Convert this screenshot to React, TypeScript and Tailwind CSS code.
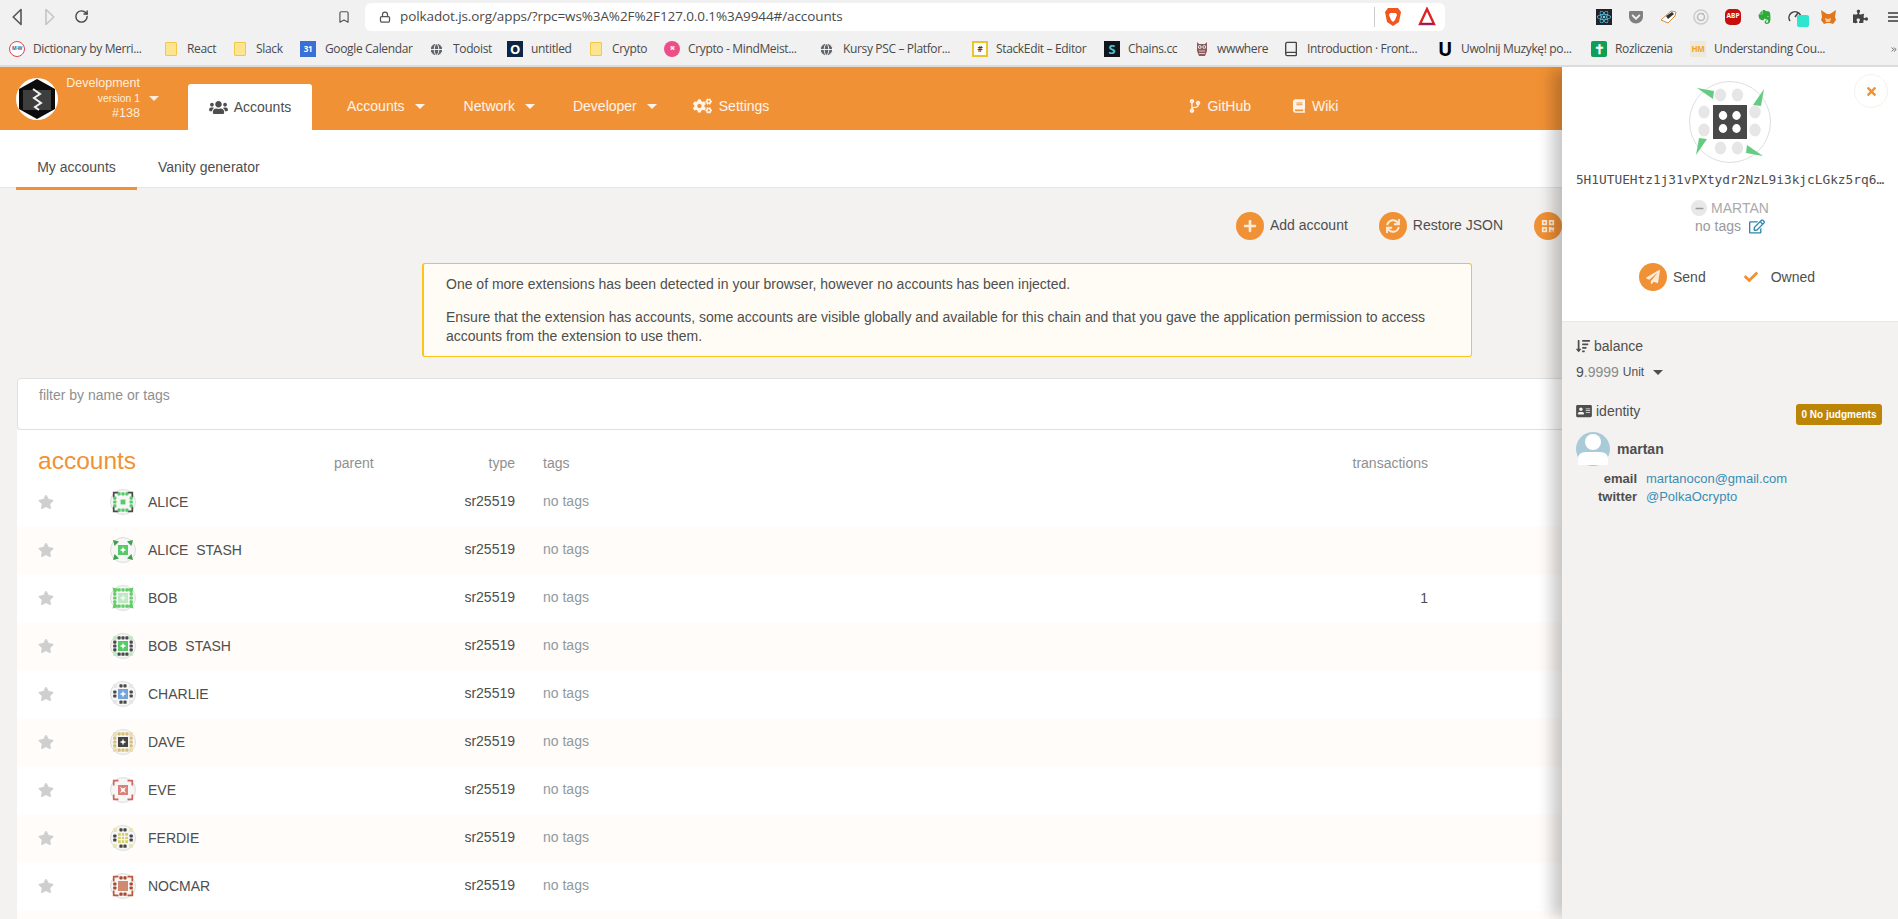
import React from "react";
import { RotateCw, Bookmark, Lock, Globe, Book, ChevronsRight } from "lucide-react";
import { FaPlus, FaSync, FaQrcode, FaPaperPlane, FaCheck, FaTimes, FaStar, FaUsers, FaCogs, FaCodeBranch, FaBook, FaRegEdit, FaSortAmountDown, FaAddressCard, FaMinus, FaPuzzlePiece, FaEvernote, FaGetPocket, FaReact } from "react-icons/fa";

const SANS = "font-['Liberation_Sans',Arial,sans-serif]";

function Caret({ className }: { className: string }) {
  return <span className={`inline-block w-0 h-0 border-x-[5px] border-x-transparent border-t-[5px] ${className}`} />;
}

function Folder() {
  return <span className="w-[12px] h-[14px] bg-[#fde58f] border border-[#f0c84c] rounded-[1px] shrink-0" />;
}
function Round({ c, t }: { c: string; t?: string }) {
  return <span className={`w-[16px] h-[16px] rounded-full shrink-0 flex items-center justify-center text-[5px] font-bold ${c}`}>{t}</span>;
}
function GlobeIco() {
  return <Globe className="w-[15px] h-[15px] text-white fill-[#5f6368] shrink-0" strokeWidth={1.4} />;
}
function Sq({ c, t }: { c: string; t?: string }) {
  return <span className={`w-[16px] h-[16px] shrink-0 flex items-center justify-center text-[8px] font-bold leading-none ${c}`}>{t}</span>;
}
function Owl() {
  return (
    <svg viewBox="0 0 16 16" className="w-[16px] h-[16px] shrink-0">
      <path d="M3 1l2 2h6l2-2v9l-2 5H5l-2-5z" fill="#8c5a5a" />
      <circle cx="5.8" cy="6" r="1.8" fill="#fff" />
      <circle cx="10.2" cy="6" r="1.8" fill="#fff" />
      <circle cx="5.8" cy="6" r="0.8" fill="#222" />
      <circle cx="10.2" cy="6" r="0.8" fill="#222" />
      <path d="M5 10h6M5 12.5h6" stroke="#e0c8c8" strokeWidth="1" />
    </svg>
  );
}

const bookmarks: { w: string; icon: React.ReactNode; label: string; gap: string }[] = [
  { w: "w-[156px]", gap: "gap-[8px]", icon: <Round c="bg-white border border-[#e0424f] text-[#44618c]" t="M·W" />, label: "Dictionary by Merri..." },
  { w: "w-[69px]", gap: "gap-[10px]", icon: <Folder />, label: "React" },
  { w: "w-[66px]", gap: "gap-[10px]", icon: <Folder />, label: "Slack" },
  { w: "w-[129px]", gap: "gap-[9px]", icon: <Sq c="bg-[#3a6fd6] text-white w-[14px]" t="31" />, label: "Google Calendar" },
  { w: "w-[78px]", gap: "gap-[9px]", icon: <GlobeIco />, label: "Todoist" },
  { w: "w-[83px]", gap: "gap-[8px]", icon: <Sq c="bg-[#0b2545] text-white text-[13px]" t="O" />, label: "untitled" },
  { w: "w-[74px]", gap: "gap-[10px]", icon: <Folder />, label: "Crypto" },
  { w: "w-[155px]", gap: "gap-[8px]", icon: <Round c="bg-[#ec4f86] text-white" t="⌘" />, label: "Crypto - MindMeist..." },
  { w: "w-[153px]", gap: "gap-[9px]", icon: <GlobeIco />, label: "Kursy PSC – Platfor..." },
  { w: "w-[132px]", gap: "gap-[8px]", icon: <Sq c="bg-white border-2 border-[#e8c52e] text-[#444]" t="#" />, label: "StackEdit – Editor" },
  { w: "w-[90px]", gap: "gap-[8px]", icon: <Sq c="bg-[#10151c] text-[#4cc4d8] text-[13px]" t="S" />, label: "Chains.cc" },
  { w: "w-[89px]", gap: "gap-[7px]", icon: <Owl />, label: "wwwhere" },
  { w: "w-[154px]", gap: "gap-[8px]", icon: <Book className="w-[16px] h-[16px] text-[#444] shrink-0" />, label: "Introduction · Front..." },
  { w: "w-[154px]", gap: "gap-[8px]", icon: <Sq c="text-black text-[19px]" t="U" />, label: "Uwolnij Muzykę! po..." },
  { w: "w-[99px]", gap: "gap-[8px]", icon: <Sq c="bg-[#0f9d58] text-white text-[13px] rounded-[2px]" t="✝" />, label: "Rozliczenia" },
  { w: "w-[150px]", gap: "gap-[8px]", icon: <Sq c="bg-[#eee9dd] text-[#f2a51e]" t="HM" />, label: "Understanding Cou..." },
];

function ExtIcons() {
  return (
    <div className="flex items-center gap-[16px] shrink-0">
      <span className="w-[16px] h-[16px] bg-[#20232a] flex items-center justify-center">
        <FaReact className="w-[14px] h-[14px] text-[#61dafb]" />
      </span>
      <FaGetPocket className="w-[16px] h-[16px] text-[#808080]" />
      <svg viewBox="0 0 17 16" className="w-[17px] h-[16px]"><path d="M1 11L11 2l5 1-1 4-7 7z" fill="#fff" stroke="#d58a3c" strokeWidth="1" /><path d="M6 7l6-4 2 2-6 5z" fill="#333" /></svg>
      <svg viewBox="0 0 16 16" className="w-[16px] h-[16px]" fill="none"><circle cx="8" cy="8" r="7" stroke="#ccc" strokeWidth="1.5" /><circle cx="8" cy="8" r="3.5" stroke="#bbb" strokeWidth="1.5" /><circle cx="10" cy="5" r="1" fill="#bbb" /></svg>
      <span className="w-[16px] h-[16px] rounded-[5px] bg-[#c70d0d] text-white text-[6.5px] font-bold flex items-center justify-center leading-none">ABP</span>
      <FaEvernote className="w-[15px] h-[16px] text-[#2dab39]" />
      <span className="relative w-[14px] h-[16px]">
        <svg viewBox="0 0 14 14" className="w-[14px] h-[14px]" fill="none" stroke="#444" strokeWidth="1.5"><path d="M2 12a6 6 0 1 1 10 0" /><path d="M7 8l3-4" /></svg>
        <span className="absolute left-[9px] top-[6px] w-[12px] h-[12px] rounded-[2px] bg-[#2ee6d0]" />
      </span>
      <svg viewBox="0 0 17 16" className="w-[17px] h-[16px] ml-[2px]"><path d="M1 1l6 4h3l6-4-1 7 1 3-3 4-3-1H7l-3 1-3-4 1-3z" fill="#e2761b" /><path d="M5 9l3 1 3-1-1 4H6z" fill="#f6c9a0" /></svg>
      <FaPuzzlePiece className="w-[15px] h-[15px] text-[#444]" />
      <span className="w-[10px] h-[10px] flex flex-col justify-between ml-[4px]"><i className="block h-[2px] bg-[#666]" /><i className="block h-[2px] bg-[#666]" /><i className="block h-[2px] bg-[#666]" /></span>
    </div>
  );
}

function BrowserChrome() {
  return (
    <div className="bg-[#f1f1f1] border-b-2 border-[#dcdcdc] h-[67px] shrink-0 flex flex-col font-['Open_Sans',sans-serif]">
      <div className="h-[33px] flex items-center pl-[12px]">
        <svg viewBox="0 0 10 18" className="w-[10px] h-[18px]" fill="none" stroke="#555" strokeWidth="1.6"><path d="M9 1.5L1.2 9 9 16.5z" strokeLinejoin="round" /></svg>
        <svg viewBox="0 0 10 18" className="w-[10px] h-[18px] ml-[23px]" fill="none" stroke="#c4c4c4" strokeWidth="1.6"><path d="M1 1.5L8.8 9 1 16.5z" strokeLinejoin="round" /></svg>
        <RotateCw className="w-[15px] h-[15px] text-[#444] ml-[19px]" strokeWidth={2.2} />
        <Bookmark className="w-[14px] h-[16px] text-[#555] ml-[248px]" strokeWidth={2} />
        <div className="ml-[14px] w-[1080px] h-[28px] bg-white rounded-[6px] flex items-center pl-[14px] pr-[9px]">
          <Lock className="w-[12px] h-[12px] text-[#555]" strokeWidth={2.5} />
          <span className="ml-[9px] text-[13.5px] tracking-[-0.1px] text-[#4a4a4a] flex-1 whitespace-nowrap">polkadot.js.org/apps/?rpc=ws%3A%2F%2F127.0.0.1%3A9944#/accounts</span>
          <span className="w-px h-[20px] bg-[#ccc] mr-[9px]" />
          <svg viewBox="0 0 18 20" className="w-[18px] h-[20px]"><path d="M4 1h10l3 4-2 10-6 4-6-4L1 5z" fill="#f1561f" /><path d="M6 6h6l1 2-2 5-2 2-2-2-2-5z" fill="#fff" /></svg>
          <svg viewBox="0 0 18 20" className="w-[18px] h-[20px] ml-[16px]"><path d="M9 2l7 15H2z" fill="none" stroke="#dc2626" strokeWidth="2.4" /><path d="M3 16h12l1 1.5H2z" fill="#5b21b6" /></svg>
        </div>
        <div className="ml-auto"><ExtIcons /></div>
      </div>
      <div className="h-[32px] flex items-center pl-[9px] text-[12px] text-[#4a4a4a] tracking-[-0.35px]">
        {bookmarks.map((b) => (
          <div key={b.label} className={`${b.w} ${b.gap} flex items-center shrink-0 whitespace-nowrap overflow-hidden`}>
            {b.icon}
            <span>{b.label}</span>
          </div>
        ))}
        <ChevronsRight className="w-[13px] h-[13px] text-[#444] ml-[50px]" strokeWidth={2.5} />
      </div>
    </div>
  );
}

function NavItem({ label }: { label: string }) {
  return (
    <span className="flex items-center gap-[10px] text-[14px] text-white/90">
      {label}
      <Caret className="border-t-white/90" />
    </span>
  );
}

function AppHeader() {
  return (
    <div className="h-[63px] bg-[#f19135] flex items-end text-white">
      <div className="self-stretch flex items-center pl-[16px] w-[188px] shrink-0">
        <svg viewBox="0 0 42 42" className="w-[42px] h-[42px] shrink-0">
          <circle cx="21" cy="21" r="21" fill="#fff" />
          <path d="M21 1l18 10v20l-18 10-18-10V11z" fill="#0c0c0c" />
          <g stroke="#8a8a8a" strokeWidth="0.8">
            {[13, 15, 17, 19, 21, 23, 25, 27, 29, 31].map((y) => <line key={y} x1="7" x2="35" y1={y} y2={y} />)}
          </g>
          <path d="M17 11l7 5-6 4 7 5-6 4 4 3" fill="none" stroke="#f2f2f2" strokeWidth="2" />
        </svg>
        <div className="w-[81px] ml-[1px] flex flex-col items-end leading-none text-[#ffeedd]">
          <span className="text-[12.5px] leading-[15px] mt-[-1px]">Development</span>
          <span className="text-[10.4px] leading-[14px] mt-[1px]">version 1</span>
          <span className="text-[12.6px] leading-[13px] mt-[1px]">#138</span>
        </div>
        <Caret className="border-t-[#ffeedd] ml-[9px]" />
      </div>
      <div className="w-[124px] h-[46px] bg-white rounded-t-[3px] flex items-center justify-center gap-[6px] text-[#4e4e4e] text-[14px] shrink-0">
        <FaUsers className="w-[19px] h-[15px] text-[#4e4e4e]" />
        Accounts
      </div>
      <div className="self-stretch flex items-center flex-1 pl-[35px] pt-[15px]">
        <NavItem label="Accounts" />
        <span className="ml-[39px]"><NavItem label="Network" /></span>
        <span className="ml-[38px]"><NavItem label="Developer" /></span>
        <span className="ml-[36px] flex items-center gap-[7px] text-[14px] text-white/90">
          <FaCogs className="w-[19px] h-[16px]" /> Settings
        </span>
        <span className="ml-[420px] flex items-center gap-[6px] text-[14px] text-white/90">
          <FaCodeBranch className="w-[12px] h-[14px]" /> GitHub
        </span>
        <span className="ml-[42px] flex items-center gap-[7px] text-[14px] text-white/90">
          <FaBook className="w-[12px] h-[14px]" /> Wiki
        </span>
      </div>
    </div>
  );
}

function ActionBtn({ icon, label }: { icon: React.ReactNode; label?: string }) {
  return (
    <div className="flex items-center gap-[6px] text-[14px] text-[#4e4e4e] shrink-0">
      <span className="w-[28px] h-[28px] rounded-full bg-[#f19135] flex items-center justify-center text-[#fdebd8] shrink-0">{icon}</span>
      {label}
    </div>
  );
}

type IdProps = {
  dot?: string;
  count?: 2 | 3;
  corner?: string;
  cornerKind?: "tri" | "L" | "dot" | "in";
  center: string;
  size?: number;
  inner?: string;
  innerKind?: "star" | "x" | "square" | "grid";
};

function Identicon({ dot, count = 3, corner, cornerKind, center, size = 10, inner, innerKind }: IdProps) {
  const offs = count === 3 ? [-3.9, 0, 3.9] : [-2, 2];
  const h = size / 2;
  return (
    <svg viewBox="-13 -13 26 26" className="w-[26px] h-[26px] shrink-0">
      <circle r="12.5" fill="#f6f6f6" stroke="#dadada" strokeWidth="0.9" />
      {corner && cornerKind === "dot" && [[-8, -8], [8, -8], [-8, 8], [8, 8]].map(([x, y], i) => (
        <rect key={i} x={x - 1.9} y={y - 1.9} width="3.8" height="3.8" rx="1" fill={corner} />
      ))}
      {corner && cornerKind === "tri" && (
        <g fill={corner}>
          <path d="M-10-10l6 1.6-4.4 4.4z" /><path d="M10-10l-1.6 6-4.4-4.4z" /><path d="M10 10l-6-1.6 4.4-4.4z" /><path d="M-10 10l1.6-6 4.4 4.4z" />
        </g>
      )}
      {corner && cornerKind === "in" && (
        <g fill={corner}>
          <path d="M-10.5-10.5l6.5 1.5-5 5z" /><path d="M10.5-10.5l-1.5 6.5-5-5z" /><path d="M10.5 10.5l-6.5-1.5 5-5z" /><path d="M-10.5 10.5l1.5-6.5 5 5z" />
        </g>
      )}
      {corner && cornerKind === "L" && (
        <g fill="none" stroke={corner} strokeWidth="1.7">
          <path d="M-9.3-4.5v-4.8h4.8M9.3-4.5v-4.8h-4.8M-9.3 4.5v4.8h4.8M9.3 4.5v4.8h-4.8" />
        </g>
      )}
      {dot && offs.map((o) => (
        <g key={o} fill={dot}>
          <rect x={o - 1.6} y={-9.8} width="3.2" height="3.2" rx="0.9" />
          <rect x={o - 1.6} y={6.6} width="3.2" height="3.2" rx="0.9" />
          <rect x={-9.8} y={o - 1.6} width="3.2" height="3.2" rx="0.9" />
          <rect x={6.6} y={o - 1.6} width="3.2" height="3.2" rx="0.9" />
        </g>
      ))}
      <rect x={-h} y={-h} width={size} height={size} fill={center} />
      {inner && innerKind === "star" && <path d="M0-3.4l.9 2.5 2.5.9-2.5.9L0 3.4l-.9-2.5-2.5-.9 2.5-.9z" fill={inner} />}
      {inner && innerKind === "x" && <path d="M-3-3L0-1.4 3-3 1.4 0 3 3 0 1.4-3 3l1.6-3z" fill={inner} />}
      {inner && innerKind === "square" && <rect x="-2.4" y="-2.4" width="4.8" height="4.8" fill={inner} />}
      {inner && innerKind === "grid" && (
        <g stroke={inner} strokeWidth="0.9"><path d="M-1.7-5V5M1.7-5V5M-5-1.7H5M-5 1.7H5" /></g>
      )}
    </svg>
  );
}

const rows: { name: string; tx?: string; icon: React.ReactNode }[] = [
  { name: "ALICE", icon: <Identicon dot="#58c96a" corner="#4a4a4a" cornerKind="L" center="#f6f6f6" inner="#58c96a" innerKind="square" /> },
  { name: "ALICE  STASH", icon: <Identicon corner="#3e9f50" cornerKind="tri" center="#58c96a" inner="#fff" innerKind="star" /> },
  { name: "BOB", tx: "1", icon: <Identicon dot="#5fcf66" corner="#5fcf66" cornerKind="in" center="#bfe9c4" inner="#f4fbf4" innerKind="star" /> },
  { name: "BOB  STASH", icon: <Identicon dot="#4a4a4a" corner="#bfe9c4" cornerKind="dot" center="#58c96a" inner="#fff" innerKind="star" /> },
  { name: "CHARLIE", icon: <Identicon dot="#4a4a4a" count={2} corner="#e6e6e6" cornerKind="dot" center="#74a3da" inner="#fff" innerKind="star" /> },
  { name: "DAVE", icon: <Identicon dot="#d8bf78" corner="#e9dcb4" cornerKind="dot" center="#444" inner="#fff" innerKind="star" /> },
  { name: "EVE", icon: <Identicon corner="#d2665d" cornerKind="L" center="#d9827a" inner="#fff" innerKind="x" /> },
  { name: "FERDIE", icon: <Identicon dot="#444" count={2} corner="#e8e6b0" cornerKind="dot" center="#d5cf6a" inner="#fff" innerKind="grid" /> },
  { name: "NOCMAR", icon: <Identicon dot="#a9492f" count={2} corner="#c2583a" cornerKind="L" center="#d08a70" /> },
];

const gridCols = "grid grid-cols-[93px_224px_100px_81px_28px_700px_185px_1fr]";

function AccountsTable() {
  return (
    <div className="bg-white">
      <div className={`${gridCols} h-[49px] pt-[18px] items-center text-[#8f8f8f] text-[14px]`}>
        <div className="col-span-2 pl-[21px] text-[24.5px] leading-none text-[#f19135] whitespace-nowrap mt-[-5px]">accounts</div>
        <div>parent</div>
        <div className="text-right">type</div>
        <div />
        <div>tags</div>
        <div className="text-right">transactions</div>
        <div />
      </div>
      {rows.map((r, i) => (
        <div key={r.name} className={`${gridCols} h-[48px] pb-[2px] items-center text-[14px] ${i % 2 ? "bg-[#fffcf9]" : "bg-white"}`}>
          <div className="pl-[21px]"><FaStar className="w-[16px] h-[16px] text-[#cfcfcf]" /></div>
          <div className="flex items-center gap-[12px] text-[#4e4e4e] whitespace-pre">{r.icon}{r.name}</div>
          <div />
          <div className="text-right text-[#4e4e4e] mt-[-2px]">sr25519</div>
          <div />
          <div className="text-[#8f9aa0] mt-[-2px]">no tags</div>
          <div className="text-right text-[#4e4e4e]">{r.tx}</div>
          <div />
        </div>
      ))}
      <div className="h-[8px] bg-[#fffcf9]" />
    </div>
  );
}

function BigIdenticon() {
  const dots = [[-9.5, -27], [7.5, -27], [-26, -10], [-26, 8], [25, -10], [25, 8], [-9.5, 26], [7.5, 26]];
  return (
    <svg viewBox="-42 -42 84 84" className="w-[84px] h-[84px]">
      <circle r="40.5" fill="#fff" stroke="#dedede" strokeWidth="1" />
      {dots.map(([x, y], i) => <ellipse key={i} cx={x} cy={y} rx="5.7" ry="6.4" fill="#e6e6e6" />)}
      <rect x="-17" y="-17" width="34" height="34" fill="#484848" />
      {[[-7, -6.5], [6.5, -6.5], [-7, 6.5], [6.5, 6.5]].map(([x, y], i) => <ellipse key={i} cx={x} cy={y} rx="4.2" ry="4.4" fill="#fff" />)}
      <g fill="#66cb82">
        <path d="M-33-34l17 3 -1 8z" />
        <path d="M34-33l-3 17-8-1z" />
        <path d="M33 34l-17-3 1-8z" />
        <path d="M-34 33l3-17 8 1z" />
      </g>
    </svg>
  );
}

function Drawer() {
  return (
    <div className="absolute right-0 top-0 bottom-0 w-[336px] bg-[#f3f2f0] shadow-[-12px_0_14px_-2px_rgba(0,0,0,0.22)] flex flex-col text-[14px] text-[#4e4e4e]">
      <div className="bg-white h-[255px] border-b border-[#e8e8e8] flex flex-col items-center relative shrink-0">
        <div className="absolute right-[10px] top-[7px] w-[34px] h-[34px] rounded-full border border-[#f8f1ea] flex items-center justify-center">
          <FaTimes className="w-[13px] h-[13px] text-[#f19135]" />
        </div>
        <div className="mt-[13px]"><BigIdenticon /></div>
        <div className="font-['DejaVu_Sans_Mono',monospace] text-[12.8px] leading-[16px] mt-[8px] whitespace-nowrap text-[#4e4e4e]">5H1UTUEHtz1j31vPXtydr2NzL9i3kjcLGkz5rq6…</div>
        <div className="flex items-center gap-[4px] mt-[12px] text-[14px] leading-[16px] text-[#aaa]">
          <span className="w-[16px] h-[16px] rounded-full bg-[#e8e8e8] flex items-center justify-center"><FaMinus className="w-[9px] h-[9px] text-[#999]" /></span>
          MARTAN
        </div>
        <div className="flex items-center gap-[8px] mt-[1px] leading-[18px] text-[#999]">
          no tags
          <FaRegEdit className="w-[16px] h-[15px] text-[#2e86ab]" />
        </div>
        <div className="flex items-center mt-[28px] mr-[6px]">
          <ActionBtn icon={<FaPaperPlane className="w-[14px] h-[14px]" />} label="Send" />
          <FaCheck className="w-[14px] h-[14px] text-[#f19135] ml-[38px]" />
          <span className="ml-[13px]">Owned</span>
        </div>
      </div>
      <div className="pl-[14px] pr-[16px] pt-[15px]">
        <div className="flex items-center gap-[4px] leading-[18px]">
          <FaSortAmountDown className="w-[14px] h-[14px] text-[#4e4e4e]" />
          balance
        </div>
        <div className="flex items-center mt-[8px] leading-[18px]">
          <span className="text-[#4e4e4e]">9</span><span className="text-[#8a8a8a]">.9999</span>
          <span className="text-[12px] ml-[4px]">Unit</span>
          <Caret className="border-t-[#4e4e4e] ml-[9px]" />
        </div>
        <div className="flex items-start justify-between mt-[21px]">
          <div className="flex items-center gap-[4px] leading-[18px]">
            <FaAddressCard className="w-[16px] h-[14px] text-[#4e4e4e]" />
            identity
          </div>
          <span className="bg-[#bd8505] text-white font-bold text-[10px] leading-[21px] h-[21px] w-[86px] text-center rounded-[3px] mt-[2px]">0 No judgments</span>
        </div>
        <div className="flex items-center gap-[7px] mt-[7px]">
          <svg viewBox="0 0 34 34" className="w-[34px] h-[34px] shrink-0">
            <circle cx="17" cy="17" r="17" fill="#a9cbd9" />
            <circle cx="17" cy="10" r="8" fill="#fff" />
            <path d="M2 33v-6q0-7 8-7h14q8 0 8 7v6z" fill="#fff" />
          </svg>
          <span className="font-bold">martan</span>
        </div>
        <div className="grid grid-cols-[47px_1fr] gap-x-[9px] pl-[14px] mt-[4px] text-[13px] leading-[18px]">
          <span className="font-bold text-right">email</span>
          <span className="text-[#3a8db5]">martanocon@gmail.com</span>
          <span className="font-bold text-right">twitter</span>
          <span className="text-[#3a8db5]">@PolkaOcrypto</span>
        </div>
      </div>
    </div>
  );
}

export default function App() {
  return (
    <div className={`w-[1898px] h-[919px] overflow-hidden flex flex-col bg-[#f3f2f0] ${SANS}`}>
      <BrowserChrome />
      <div className="flex-1 relative overflow-hidden min-h-0">
        <AppHeader />
        <div className="h-[58px] bg-white border-b border-[#e6e6e6] flex items-stretch pl-[16px] text-[14px] text-[#4e4e4e]">
          <div className="w-[121px] h-[60px] border-b-[3px] border-[#f19135] flex items-center justify-center pt-[18px]">My accounts</div>
          <div className="ml-[21px] flex items-center pt-[18px]">Vanity generator</div>
        </div>
        <div className="pl-[17px]">
          <div className="flex items-center h-[75px] pl-[1219px] gap-[31px]">
            <ActionBtn icon={<FaPlus className="w-[14px] h-[14px]" />} label="Add account" />
            <ActionBtn icon={<FaSync className="w-[14px] h-[14px]" />} label="Restore JSON" />
            <ActionBtn icon={<FaQrcode className="w-[14px] h-[14px]" />} />
          </div>
          <div className="ml-[405px] w-[1050px] h-[94px] bg-[#fffcf5] border border-[#fcc419] border-l-2 rounded-[3px] pl-[22px] pr-[20px] pt-[11px] text-[14px] leading-[19px] text-[#4e4e4e] flex flex-col gap-[14px]">
            <p>One of more extensions has been detected in your browser, however no accounts has been injected.</p>
            <p>Ensure that the extension has accounts, some accounts are visible globally and available for this chain and that you gave the application permission to access accounts from the extension to use them.</p>
          </div>
          <div className="mt-[21px] h-[52px] bg-white border border-[#e0e0e0] rounded-l-[4px] pl-[21px] pt-[7px] text-[14px] leading-[19px] text-[#8f8f8f]">filter by name or tags</div>
          <AccountsTable />
        </div>
        <Drawer />
      </div>
    </div>
  );
}
